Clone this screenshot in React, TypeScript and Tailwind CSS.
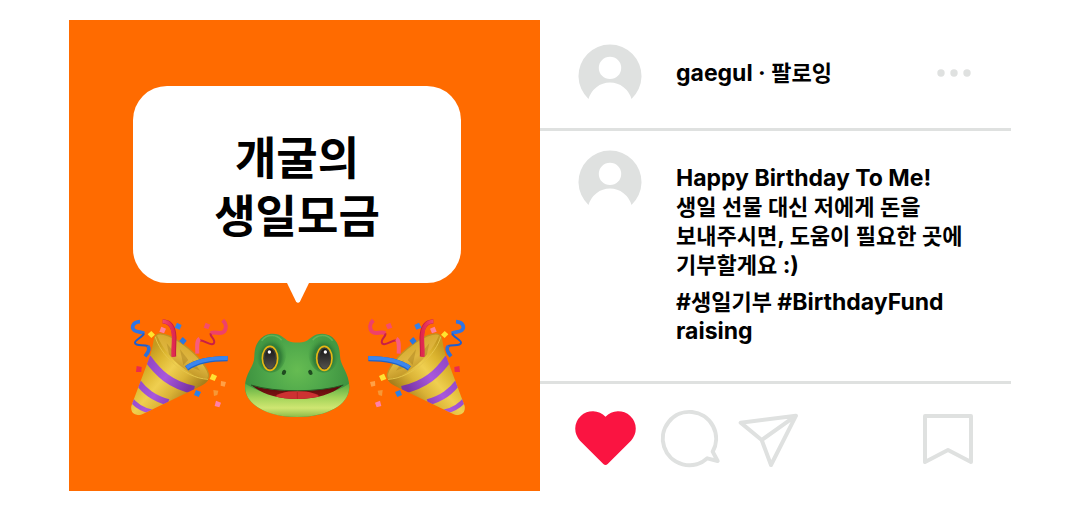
import { ReactNode } from 'react';

const captionLines: ReactNode[] = [
  'Happy Birthday To Me!',
  <><Ko>생일</Ko> <Ko>선물</Ko> <Ko>대신</Ko> <Ko>저에게</Ko> <Ko>돈을</Ko></>,
  <><Ko>보내주시면</Ko>, <Ko>도움이</Ko> <Ko>필요한</Ko> <Ko>곳에</Ko></>,
  <><Ko>기부할게요</Ko> :)</>,
];

// Hangul sits a step smaller than the latin text beside it
function Ko({ children }: { children: ReactNode }) {
  return <span className="text-[22px] leading-none">{children}</span>;
}

function Avatar() {
  return (
    <svg viewBox="0 0 64 55" className="w-16 h-[55px] shrink-0" aria-hidden="true">
      <path
        fill="#dfe1e0"
        fillRule="evenodd"
        d="M10.5 55A31.500 31.500 0 1 1 53.500 55A22.300 22.300 0 0 0 10.500 55ZM32 12.700a11.200 11.200 0 1 0 0 22.400a11.200 11.200 0 0 0 0-22.400Z"
      />
    </svg>
  );
}

function PartyPopper({ flip = false }: { flip?: boolean }) {
  const id = flip ? 'popper-right' : 'popper-left';
  return (
    <svg
      viewBox="27 21 300 300"
      className={flip ? 'w-[100px] h-[100px] shrink-0 -scale-x-100' : 'w-[100px] h-[100px] shrink-0'}
      aria-hidden="true"
    >
      <defs>
        <linearGradient id={`${id}-gold`} gradientUnits="userSpaceOnUse" x1="50" y1="170" x2="190" y2="290">
          <stop offset="0" stopColor="#c49a20" />
          <stop offset="0.2" stopColor="#dcb52f" />
          <stop offset="0.45" stopColor="#efcf50" />
          <stop offset="0.7" stopColor="#dbb437" />
          <stop offset="1" stopColor="#a67f1c" />
        </linearGradient>
        <linearGradient id={`${id}-inner`} x1="0" y1="0" x2="1" y2="1">
          <stop offset="0" stopColor="#d3a526" />
          <stop offset="0.5" stopColor="#dfb640" />
          <stop offset="1" stopColor="#b58a1c" />
        </linearGradient>
        <linearGradient id={`${id}-purple`} gradientUnits="userSpaceOnUse" x1="60" y1="180" x2="190" y2="260">
          <stop offset="0" stopColor="#8f45c4" />
          <stop offset="0.5" stopColor="#a858dc" />
          <stop offset="1" stopColor="#7a35a8" />
        </linearGradient>
        <linearGradient id={`${id}-red`} x1="0" y1="0" x2="1" y2="0">
          <stop offset="0" stopColor="#f04a70" />
          <stop offset="1" stopColor="#e02850" />
        </linearGradient>
        <clipPath id={`${id}-body`}>
          <path d="M103 80C100 95 98 110 91 135L34 288C32 300 36 309 45 313C54 317 62 316 70 311L218 240C242 229 262 220 266 207C225 207 145 155 112 78Z" />
        </clipPath>
      </defs>

      <ellipse cx="186" cy="141" rx="101" ry="32" transform="rotate(40 186 141)" fill={`url(#${id}-inner)`} stroke="#bf9224" strokeWidth="4" />
      <path d="M140 100L165 130L150 145ZM180 118L205 150L190 165ZM218 150L240 182L215 172Z" fill="#8d6712" opacity="0.3" />

      <g clipPath={`url(#${id}-body)`}>
        <rect x="27" y="70" width="245" height="255" fill={`url(#${id}-gold)`} />
        <g fill="none" stroke={`url(#${id}-purple)`}>
          <path d="M82 144C115 190 150 224 222 240" strokeWidth="24" />
          <path d="M52 214C75 245 100 264 145 277" strokeWidth="19" />
          <path d="M30 264C45 285 62 298 95 305" strokeWidth="14" />
        </g>
      </g>
      <path d="M106 80C118 130 190 204 264 208" fill="none" stroke="#e6c54a" strokeWidth="3" />

      {/* streamers coming out of the cone */}
      <path d="M128 34C152 35 162 52 163 82C163 102 161 120 162 140" fill="none" stroke="#c41d42" strokeWidth="13" />
      <path d="M128 34C152 35 160 52 161 82C161 102 159 120 160 140" fill="none" stroke={`url(#${id}-red)`} strokeWidth="11" />
      <path d="M200 175C230 153 275 146 323 146" fill="none" stroke="#1e63c8" strokeWidth="16" />
      <path d="M200 173C230 151 275 144 323 144" fill="none" stroke="#3b86ee" strokeWidth="12" />

      {/* curly ribbons */}
      <g fill="none" strokeLinejoin="round">
        <path d="M60 35C38 36 33 53 43 61C52 68 66 65 72 70" stroke="#2f74e4" strokeWidth="11" />
        <path d="M72 70C68 82 42 91 45 99C48 110 72 102 83 108" stroke="#1c5ed0" strokeWidth="6" />
        <path d="M83 108C92 116 85 127 75 139" stroke="#2b70da" strokeWidth="11" />
        <path d="M308 31C320 42 320 55 312 65C302 75 285 63 272 70" stroke="#ee4169" strokeWidth="12" />
        <path d="M272 70C268 80 290 89 281 101C268 109 253 88 235 91" stroke="#c91f46" strokeWidth="6" />
        <path d="M239 86C230 91 231 106 232 131" stroke="#f75c80" strokeWidth="12" />
      </g>

      {/* confetti */}
      <path d="M94 63L105 74L94 84L83 73Z" fill="#ffe52e" />
      <path d="M124 50L138 56L132 70L118 65Z" fill="#ff809b" />
      <path d="M171 38L185 45L179 59L164 53Z" fill="#3382e8" />
      <path d="M188 81L200 92L190 104L178 93Z" fill="#2877e2" />
      <path d="M257 38L271 44L265 58L251 53Z" fill="#f54c6b" />
      <path d="M50 168L65 171L64 186L48 186Z" fill="#e92b50" />
      <path d="M276 191L291 198L284 213L269 207Z" fill="#ffe333" />
      <path d="M303 213L318 216L314 230L302 227Z" fill="#ffa047" />
      <path d="M280 240L295 242L292 255L282 258Z" fill="#f69836" />
      <path d="M228 240L243 246L236 261L222 255Z" fill="#2880e9" />
      <path d="M288 272L303 278L298 292L284 288Z" fill="#ff80aa" />
    </svg>
  );
}

function Frog() {
  return (
    <svg viewBox="27 183 324 258" className="w-[108px] h-[86px] shrink-0" role="img" aria-label="frog">
      <defs>
        <radialGradient id="frog-skin" gradientUnits="userSpaceOnUse" cx="187" cy="300" r="165">
          <stop offset="0" stopColor="#66bc52" />
          <stop offset="0.5" stopColor="#4fa84b" />
          <stop offset="1" stopColor="#3d913f" />
        </radialGradient>
        <linearGradient id="frog-chin" gradientUnits="userSpaceOnUse" x1="187" y1="345" x2="187" y2="441">
          <stop offset="0" stopColor="#5eae45" />
          <stop offset="0.4" stopColor="#a4d45a" />
          <stop offset="0.72" stopColor="#cfe672" />
          <stop offset="1" stopColor="#8dbb48" />
        </linearGradient>
        <radialGradient id="frog-brow" cx="0.5" cy="0.6" r="0.55">
          <stop offset="0" stopColor="#2a7033" />
          <stop offset="0.6" stopColor="#348039" />
          <stop offset="1" stopColor="#4ba545" stopOpacity="0" />
        </radialGradient>
        <linearGradient id="frog-mouth" x1="0" y1="0" x2="0" y2="1">
          <stop offset="0" stopColor="#4c0707" />
          <stop offset="1" stopColor="#8a1616" />
        </linearGradient>
        <linearGradient id="frog-pupil" x1="0" y1="0" x2="0" y2="1">
          <stop offset="0" stopColor="#171717" />
          <stop offset="1" stopColor="#55534d" />
        </linearGradient>
        <clipPath id="frog-lips">
          <path d="M48 345C120 368 254 368 325 345C290 374 245 386 187 387C128 386 85 374 48 345Z" />
        </clipPath>
      </defs>
      <path d="M58 259C58 216 83 191 113 191C139 191 149 207 160 213C175 219 199 219 214 213C225 207 235 191 262 191C291 191 315 216 315 257C315 287 343 308 343 351C343 402 280 441 187 441C94 441 30 402 30 351C30 308 58 292 58 259Z" fill="url(#frog-skin)" />
      <path d="M31 341C74 369 120 378 187 378C254 378 300 369 342 341C351 401 280 441 187 441C94 441 23 401 31 341Z" fill="url(#frog-chin)" />
      <ellipse cx="108" cy="250" rx="46" ry="58" fill="url(#frog-brow)" />
      <ellipse cx="266" cy="250" rx="46" ry="58" fill="url(#frog-brow)" />
      <path d="M80 212C97 190 126 193 140 211M233 211C247 193 276 190 293 212" fill="none" stroke="#7bc56c" strokeWidth="5" opacity="0.5" />
      <g fill="#39413a" stroke="#e6b813" strokeWidth="5">
        <ellipse cx="105" cy="265" rx="23" ry="36" />
        <ellipse cx="268" cy="265" rx="23" ry="36" />
      </g>
      <g fill="url(#frog-pupil)">
        <ellipse cx="105" cy="266" rx="16" ry="30" />
        <ellipse cx="269" cy="266" rx="16" ry="30" />
      </g>
      <g fill="#fff">
        <circle cx="103" cy="246" r="5" />
        <circle cx="271" cy="246" r="5" />
      </g>
      <g fill="#1f4b20">
        <ellipse cx="147" cy="307" rx="6" ry="8" transform="rotate(25 147 307)" />
        <ellipse cx="226" cy="307" rx="6" ry="8" transform="rotate(-25 226 307)" />
      </g>
      <g clipPath="url(#frog-lips)">
        <rect x="45" y="340" width="285" height="50" fill="url(#frog-mouth)" />
        <ellipse cx="187" cy="385" rx="68" ry="22" fill="#cd3232" />
        <path d="M187 366V388" stroke="#b42626" strokeWidth="3" />
      </g>
      <path d="M48 345C120 368 254 368 325 345" fill="none" stroke="#285824" strokeWidth="3" />
    </svg>
  );
}

function FundCover() {
  return (
    <section className="aspect-square bg-[#ff6b00] pt-[66px] pl-[60px] pr-[75px]">
      <div className="mx-1 h-[197px] rounded-[34px] bg-white flex items-center justify-center">
        <h1 className="text-center text-[45px] leading-[58px] font-bold pt-1.5">
          개굴의
          <br />
          생일모금
        </h1>
      </div>
      <svg viewBox="-2 0 24 20" className="block mx-auto w-6 h-5" aria-hidden="true">
        <path d="M0 0H22L13 18.500Q11 21 9 18.500Z" fill="#fff" />
      </svg>
      <div className="mt-[14px] -mr-0.5 flex items-end justify-between">
        <PartyPopper />
        <Frog />
        <PartyPopper flip />
      </div>
    </section>
  );
}

function PostActions() {
  return (
    <div className="flex items-center pt-[25px] pl-[35px] pr-[37px] text-[#dfe1e0]">
      <button type="button" aria-label="Like">
        <svg viewBox="30 42 183 180" className="w-[61px] h-[60px]">
          <path d="M121.500 65A52 52 0 0 0 45 137L115 207Q121.500 213 128 207L198 137A52 52 0 0 0 121.500 65Z" fill="#fa1441" />
        </svg>
      </button>
      <button type="button" aria-label="Comment" className="ml-6">
        <svg viewBox="285 42 183 180" className="w-[61px] h-[60px]" fill="none" stroke="currentColor" strokeWidth="12" strokeLinejoin="round">
          <path d="M427 190A80 80 0 1 1 443 170L458 198Z" />
        </svg>
      </button>
      <button type="button" aria-label="Share" className="ml-[17px]">
        <svg viewBox="519 42 183 180" className="w-[61px] h-[60px]" fill="none" stroke="currentColor" strokeWidth="12" strokeLinejoin="round">
          <path d="M527 83L693 62L618 210L590 135ZM590 135L693 62" />
        </svg>
      </button>
      <button type="button" aria-label="Save" className="ml-auto">
        <svg viewBox="66 117 156 180" className="w-[52px] h-[60px]" fill="none" stroke="currentColor" strokeWidth="12" strokeLinejoin="round">
          <path d="M75 138H213V276L144 240L75 276Z" />
        </svg>
      </button>
    </div>
  );
}

export default function App() {
  return (
    <main className="min-h-screen bg-white text-black px-[69px] py-5 font-['Inter','Noto_Sans_CJK_KR',sans-serif]">
      <article className="grid grid-cols-2">
        <FundCover />
        <section>
          <header className="flex items-start pt-6 pl-[38px] pr-10 pb-[29px] border-b-3 border-[#dfe1e0]">
            <Avatar />
            <p className="ml-[34px] mt-[15px] text-[23px] leading-[29px] font-bold">
              gaegul · <Ko>팔로잉</Ko>
            </p>
            <button type="button" aria-label="More" className="ml-auto mt-[25px] text-[#dfe1e0]">
              <svg viewBox="0 0 34 8" className="block w-[34px] h-2" fill="currentColor">
                <circle cx="4" cy="4" r="3.700" />
                <circle cx="17" cy="4" r="3.700" />
                <circle cx="30" cy="4" r="3.700" />
              </svg>
            </button>
          </header>
          <div className="flex items-start pt-[19px] pl-[38px] pb-[35px] border-b-3 border-[#dfe1e0]">
            <Avatar />
            <div className="ml-[34px] mt-[14px] text-[23px] leading-[29px] font-bold whitespace-nowrap">
              {captionLines.map((line, i) => (
                <p key={i}>{line}</p>
              ))}
              <p className="mt-2">
                #<Ko>생일기부</Ko> #BirthdayFund
                <br />
                raising
              </p>
            </div>
          </div>
          <PostActions />
        </section>
      </article>
    </main>
  );
}
